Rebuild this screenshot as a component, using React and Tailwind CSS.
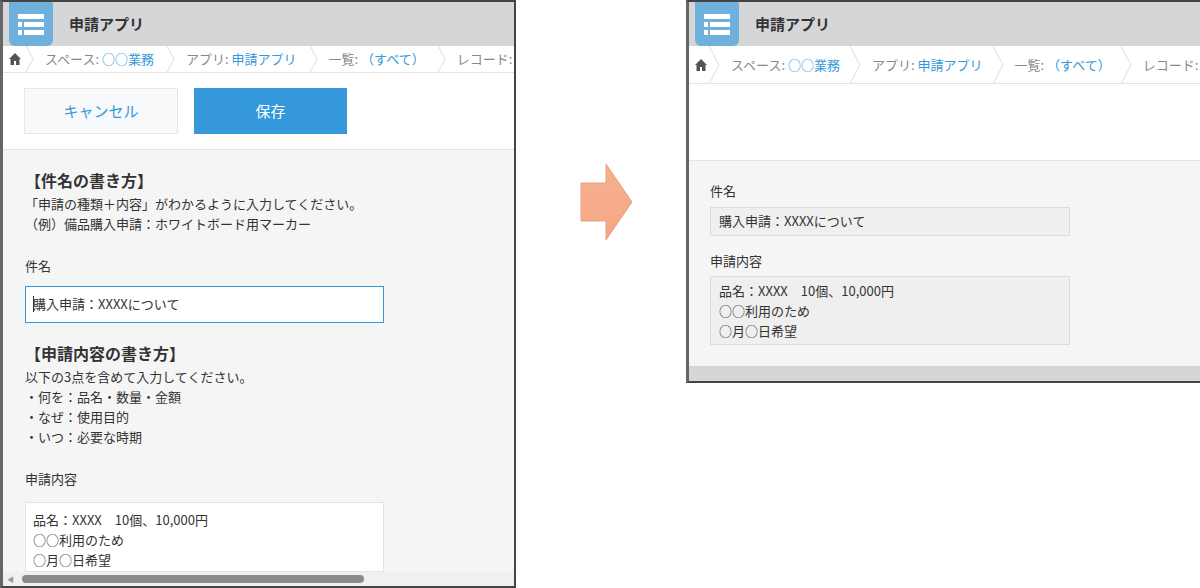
const F = { fontFamily: '"Noto Sans CJK JP","Noto Sans",sans-serif' };

function Header() {
  return (
    <>
      <div className="flex h-[44px] items-center bg-[#d4d6d7]">
        <div className="ml-[6px] flex h-[44px] w-[44px] items-center justify-center rounded-b-[6px] rounded-tr-[2px] bg-[#6fb1dc]">
          <svg width="30" height="26" viewBox="0 0 30 26">
            <rect x="2" y="3" width="26" height="5" fill="#fff" />
            <rect x="2" y="11" width="4" height="5" fill="#fff" />
            <rect x="8" y="11" width="20" height="5" fill="#fff" />
            <rect x="2" y="19" width="4" height="5" fill="#fff" />
            <rect x="8" y="19" width="20" height="5" fill="#fff" />
          </svg>
        </div>
        <div className="ml-[16px] text-[15px] font-bold text-[#333]">申請アプリ</div>
      </div>
      <div className="flex h-[38px] items-center overflow-hidden whitespace-nowrap border-b border-[#e3e3e3] bg-white text-[13px] text-[#888]">
        <div className="flex w-[34px] justify-center pl-[6px]">
          <svg width="12" height="12" viewBox="0 0 12 12"><path d="M6 0L0 6h1.5v6h3.5V8h2v4h3.5V6H12z" fill="#555" /></svg>
        </div>
        {[
          ['スペース: ', '○○業務'],
          ['アプリ: ', '申請アプリ'],
          ['一覧: ', '（すべて）'],
          ['レコード: ', ''],
        ].map(([a, b], i) => (
          <div key={i} className="flex h-full items-center">
            <svg width="16" height="38" viewBox="0 0 16 38"><path d="M2 0L12 19L2 38" stroke="#ddd" fill="none" /></svg>
            <span className="px-[8px]">{a}<span className="text-[#3498db]">{b}</span></span>
          </div>
        ))}
      </div>
    </>
  );
}

export default function App() {
  return (
    <div style={F} className="flex h-[588px] w-[1200px] items-start bg-white">
      <div className="flex h-[588px] w-[516px] shrink-0 flex-col overflow-hidden border-2 border-[#444] border-l-[3px] border-l-[#666]">
        <Header />
        <div className="flex h-[76px] shrink-0 items-center gap-[16px] bg-white pl-[21px]">
          <div className="flex h-[46px] w-[154px] items-center justify-center border border-[#e3e7e8] bg-[#f7f9fa] text-[15px] text-[#3498db]">キャンセル</div>
          <div className="flex h-[46px] w-[153px] items-center justify-center bg-[#3498db] text-[15px] text-white">保存</div>
        </div>
        <div className="flex-1 border-t border-[#e3e3e3] bg-[#f5f5f5] pl-[22px] text-[13px] text-[#333]">
          <div className="mt-[18px] text-[16px] font-bold">【件名の書き方】</div>
          <div className="mt-[2px] leading-[20px]">「申請の種類＋内容」がわかるように入力してください。</div>
          <div className="leading-[20px]">（例）備品購入申請：ホワイトボード用マーカー</div>
          <div className="mt-[22px]">件名</div>
          <div className="mt-[10px] flex h-[37px] w-[359px] items-center border border-[#3498db] bg-white pl-[7px]"><span className="mr-[-1px] h-[16px] w-px bg-[#333]" />購入申請：XXXXについて</div>
          <div className="mt-[18px] text-[16px] font-bold">【申請内容の書き方】</div>
          <div className="mt-[2px] leading-[20px]">以下の3点を含めて入力してください。</div>
          <div className="leading-[20px]">・何を：品名・数量・金額</div>
          <div className="leading-[20px]">・なぜ：使用目的</div>
          <div className="leading-[20px]">・いつ：必要な時期</div>
          <div className="mt-[22px]">申請内容</div>
          <div className="mt-[14px] h-[70px] w-[359px] border border-[#e3e3e3] bg-white px-[7px] pt-[7px] leading-[20px]">
            <div>品名：XXXX　10個、10,000円</div>
            <div>○○利用の<span>ため</span></div>
            <div>○月○日希望</div>
          </div>
        </div>
        <div className="flex h-[14px] shrink-0 items-center bg-[#f0f0f0] pl-[4px]">
          <span className="text-[7px] text-[#999]">◀</span>
          <div className="ml-[8px] h-[8px] w-[342px] rounded-full bg-[#8a8a8a]" />
        </div>
      </div>

      <div className="ml-[64px] mt-[163px] shrink-0">
        <svg width="54" height="78" viewBox="0 0 54 78">
          <defs>
            <linearGradient id="g" x1="0" y1="0" x2="0" y2="1">
              <stop offset="0" stopColor="#f7b08f" />
              <stop offset="1" stopColor="#f4a785" />
            </linearGradient>
          </defs>
          <path d="M1 20H26V1L52 39L26 77V58H1Z" fill="url(#g)" stroke="#eaa080" strokeWidth="1" />
        </svg>
      </div>

      <div className="ml-[52px] flex h-[383px] w-[514px] shrink-0 flex-col overflow-hidden border-2 border-[#444] border-l-[3px] border-l-[#666] border-r-0">
        <Header />
        <div className="h-[76px] shrink-0 bg-white" />
        <div className="flex-1 border-t border-[#e3e3e3] bg-[#f5f5f5] pl-[21px] text-[13px] text-[#333]">
          <div className="mt-[20px]">件名</div>
          <div className="mt-[6px] flex h-[29px] w-[360px] items-center border border-[#dcdcdc] bg-[#efefef] pl-[8px]">購入申請：XXXXについて</div>
          <div className="mt-[15px]">申請内容</div>
          <div className="mt-[6px] h-[69px] w-[360px] border border-[#dcdcdc] bg-[#efefef] px-[8px] pt-[4px] leading-[20px]">
            <div>品名：XXXX　10個、10,000円</div>
            <div>○○利用のため</div>
            <div>○月○日希望</div>
          </div>
        </div>
        <div className="h-[15px] shrink-0 bg-[#d4d6d7]" />
      </div>
    </div>
  );
}
